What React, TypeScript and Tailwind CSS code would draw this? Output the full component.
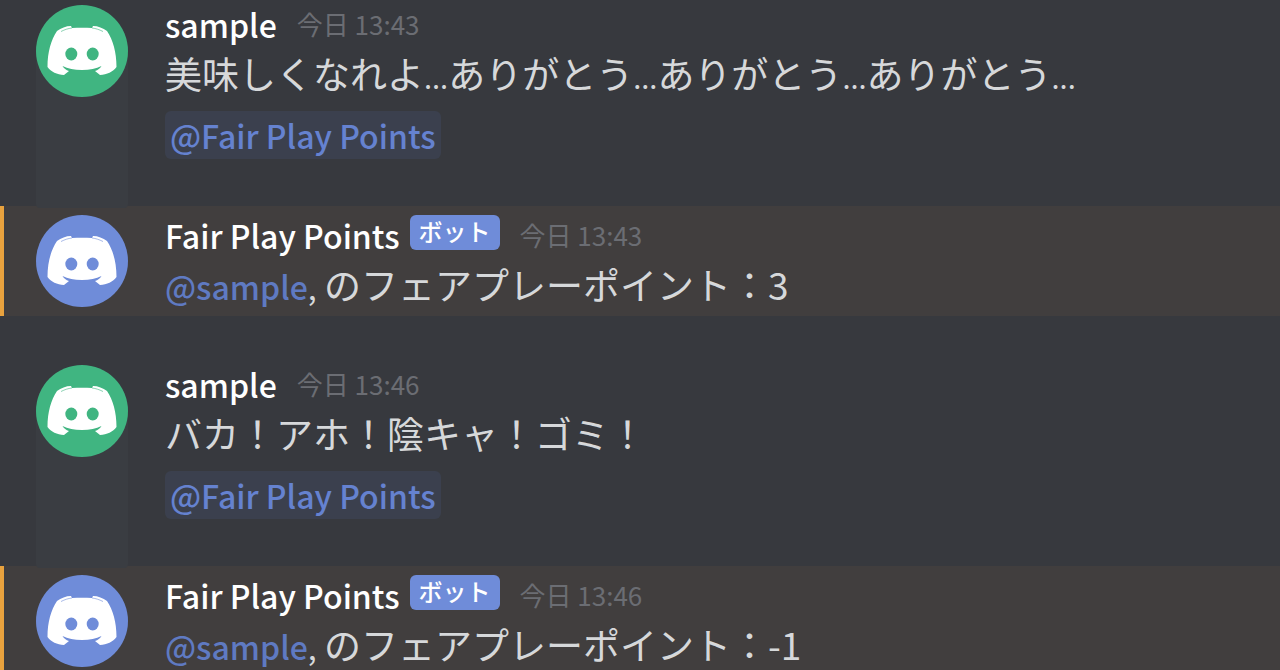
import clsx from "clsx";

type Message = {
  id: number;
  author: string;
  time: string;
  bot?: boolean;
  text?: string;
  score?: string;
};

const messages: Message[] = [
  {
    id: 1,
    author: "sample",
    time: "今日 13:43",
    text: "美味しくなれよ...ありがとう...ありがとう...ありがとう...",
  },
  { id: 2, author: "Fair Play Points", time: "今日 13:43", bot: true, score: "3" },
  { id: 3, author: "sample", time: "今日 13:46", text: "バカ！アホ！陰キャ！ゴミ！" },
  { id: 4, author: "Fair Play Points", time: "今日 13:46", bot: true, score: "-1" },
];

const Avatar = ({ bot }: { bot?: boolean }) => (
  <svg
    viewBox="0 0 92 92"
    className={clsx(
      "size-[92px] rounded-full",
      bot ? "bg-[#6f8cd9] text-[#6f8cd9]" : "bg-[#40b581] text-[#40b581]"
    )}
    aria-hidden="true"
  >
    <path
      fill="#fff"
      d="M36 23L35 21C30 21 25 23 21 26C15 35 11.5 47 11.5 62C15 67 21 69.5 28 70L33 66C30 65 28 63.5 26.5 61C32 63.5 38 65 46 65C54 65 60 63.5 65.5 61C64 63.5 62 65 59 66L64 70C71 69.5 77 67 80.5 62C80.5 47 77 35 71 26C67 23 62 21 57 21L56 23C49.5 22.5 42.5 22.5 36 23Z"
    />
    <path
      d="M25 26.500C29 24.500 32 23.500 36 23M67 26.500C63 24.500 60 23.500 56 23"
      fill="none"
      stroke="currentColor"
      strokeWidth="1"
      opacity="0.6"
    />
    <ellipse cx="35.300" cy="49" rx="6" ry="6.500" fill="currentColor" />
    <ellipse cx="56.700" cy="49" rx="6" ry="6.500" fill="currentColor" />
  </svg>
);

// Dots are set smaller than the kana around them
const MessageText = ({ text }: { text: string }) => (
  <p>
    {text.split(/(\.{3})/).map((part, idx) =>
      part === "..." ? (
        <span key={idx} className="text-[29px] leading-none">
          {part}
        </span>
      ) : (
        part
      )
    )}
  </p>
);

const MessageRow = ({ author, time, bot, text, score }: Message) => (
  <li
    className={clsx(
      "flex gap-[37px] pr-4",
      bot
        ? "border-l-4 border-[#e8a23e] bg-[#413e3e] pt-[5px] pb-[7px] pl-8"
        : "pl-9 not-first:pt-[44px]"
    )}
  >
    {/* Avatar column, tinted below the picture for users */}
    <div
      className={clsx(
        "w-[92px] shrink-0",
        bot
          ? "mt-1 -mb-2"
          : "relative z-10 mt-[5px] -mb-[2px] rounded-t-[46px] rounded-b-sm bg-[#3a3d42]"
      )}
    >
      <Avatar bot={bot} />
    </div>

    <div className="min-w-0 flex-1">
      <div className="flex h-[48px] items-center">
        <h3 className="text-[32px] leading-[48px] font-medium text-white">{author}</h3>
        {bot && (
          <span className="mt-1 ml-[10px] flex h-[35px] items-center self-start rounded-md bg-[#6f8cd9] px-[9px] pb-1 text-2xl font-medium text-white">
            ボット
          </span>
        )}
        <time className="ml-5 text-[26px] text-[#6b6d73]">{time}</time>
      </div>

      {bot ? (
        <p>
          <span className="text-[32px] leading-none">
            <a href="#sample" className="font-medium text-[#5f7ac2]">
              @sample
            </a>
            ,{" "}
          </span>
          のフェアプレーポイント：{score}
        </p>
      ) : (
        <>
          <MessageText text={text ?? ""} />
          <p className="mt-[13px] mb-[47px] flex h-[48px]">
            <a
              href="#fair-play-points"
              className="rounded-md bg-[#3b404e] px-[5px] text-[32px] leading-[48px] font-medium text-[#6582d0]"
            >
              @Fair Play Points
            </a>
          </p>
        </>
      )}
    </div>
  </li>
);

const App = () => {
  return (
    <main className="h-screen overflow-hidden bg-[#37393e] font-['Noto_Sans_CJK_JP',sans-serif] text-[37px] leading-[50px] text-[#d6d8da]">
      <ul>
        {messages.map((message) => (
          <MessageRow key={message.id} {...message} />
        ))}
      </ul>
    </main>
  );
};

export default App;
